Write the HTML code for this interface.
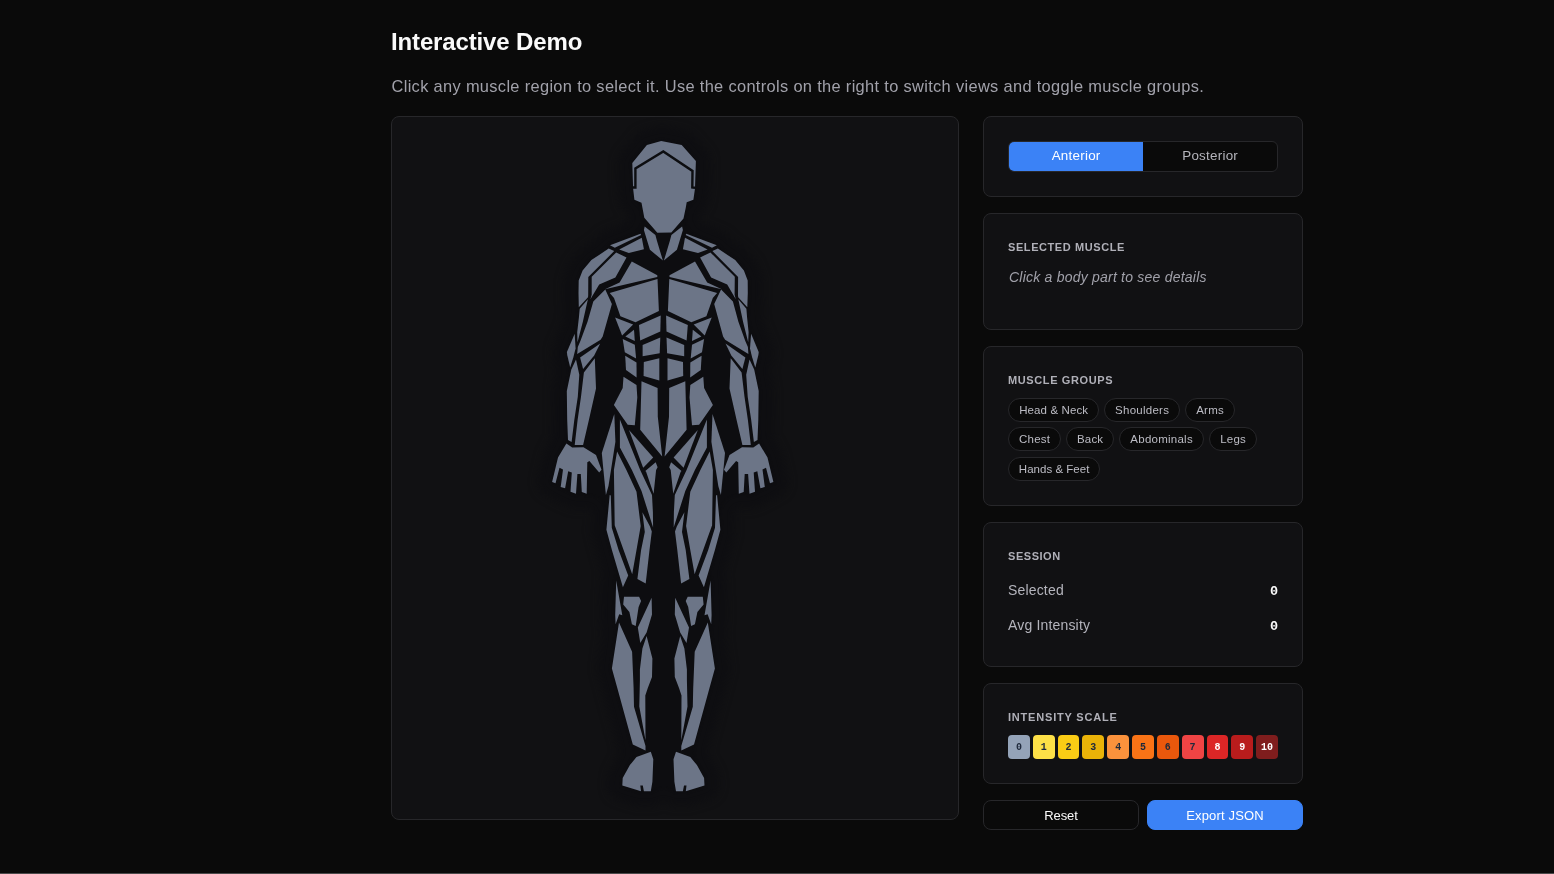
<!DOCTYPE html>
<html lang="en">
<head>
<meta charset="utf-8">
<title>Interactive Demo</title>
<style>
  html, body { margin: 0; padding: 0; }
  body {
    width: 1554px; height: 874px; overflow: hidden; position: relative;
    background: #0a0a0a; color: #fafafa;
    font-family: "Liberation Sans", sans-serif;
    -webkit-font-smoothing: antialiased;
  }
  #root { position: absolute; left: 0; top: 0; width: 1554px; height: 874px; will-change: transform; }
  .abs { position: absolute; box-sizing: border-box; }
  h1 {
    position: absolute; margin: 0; left: 391px; top: 27px;
    font-size: 24px; line-height: 30px; font-weight: 700; color: #fafafa;
    letter-spacing: -0.14px; white-space: nowrap;
  }
  .sub {
    position: absolute; margin: 0; left: 391.5px; top: 75px;
    font-size: 16.4px; line-height: 22px; color: #a1a1aa; white-space: nowrap;
    letter-spacing: 0.334px;
  }
  .card {
    position: absolute; box-sizing: border-box;
    background: #111113; border: 1px solid #27272a; border-radius: 8px;
  }
  .label {
    position: absolute; left: 24px; margin: 0;
    font-size: 11px; line-height: 14px; font-weight: 700; color: #b0b0b8;
    letter-spacing: 0.6px; white-space: nowrap;
  }
  .toggle {
    position: absolute; left: 24px; top: 24px; width: 270px; height: 31px;
    box-sizing: border-box; border: 1px solid #27272a; border-radius: 6px;
    background: #0a0a0a; overflow: hidden; display: flex;
  }
  .toggle div {
    flex: 1; text-align: center; font-size: 13.4px; line-height: 28.6px; color: #b4b4bb; letter-spacing: 0.25px; text-indent: 0.25px;
  }
  .toggle div.on { background: #3b82f6; color: #ffffff; }
  .hint {
    position: absolute; left: 25px; top: 54px; margin: 0;
    font-size: 14px; line-height: 18px; font-style: italic; color: #a1a1aa; white-space: nowrap; letter-spacing: 0.22px;
  }
  .chip {
    position: absolute; box-sizing: border-box; height: 24px;
    border: 1px solid #27272a; border-radius: 12px; background: #0a0a0a;
    font-size: 11.5px; line-height: 22px; color: #bcbcc4; text-align: center; white-space: nowrap; letter-spacing: 0.25px; text-indent: 0.25px;
  }
  .row { position: absolute; left: 24px; right: 24px; height: 20px; }
  .row span { position: absolute; top: 0; font-size: 14px; line-height: 20px; color: #b4b4bc; white-space: nowrap; letter-spacing: 0.17px; }
  .row span.k { left: 0; }
  .row span.v { right: 0; top: 1.5px; font-family: "Liberation Mono", monospace; font-weight: 700; font-size: 13.5px; color: #fafafa; letter-spacing: 0; }
  .sws { position: absolute; left: 24px; top: 51px; width: 270px; height: 24px; display: flex; gap: 3px; }
  .sw {
    flex: 1; height: 24px; border-radius: 4px;
    font-family: "Liberation Mono", monospace; font-weight: 700; font-size: 10px; line-height: 26px;
    text-align: center; color: #1e293b;
  }
  .btn {
    position: absolute; box-sizing: border-box; top: 800px; height: 30px; border-radius: 8px;
    font-size: 13px; line-height: 29px; text-align: center; color: #fafafa;
  }
  .btn.reset { left: 983px; width: 156px; background: #0a0a0a; border: 1px solid #27272a; letter-spacing: -0.1px; }
  .btn.export { left: 1147px; width: 156px; background: #3b82f6; border: 1px solid #3b82f6; color: #fff; letter-spacing: 0.17px; text-indent: 0.17px; }
  .bottomline { position: absolute; left: 0; top: 873px; width: 1554px; height: 1px; background: #4a4a4a; }
</style>
</head>
<body>
  <div id="root">
  <h1>Interactive Demo</h1>
  <p class="sub">Click any muscle region to select it. Use the controls on the right to switch views and toggle muscle groups.</p>

  <div class="card" style="left:391px; top:116px; width:568px; height:704px;">
    <svg class="abs" style="left:-1px; top:-1px;" width="568" height="704" viewBox="391 116 568 704">
<defs><filter id="soft" color-interpolation-filters="sRGB" x="-20%" y="-10%" width="140%" height="120%"><feGaussianBlur stdDeviation="4"/></filter><filter id="soft2" color-interpolation-filters="sRGB" x="-20%" y="-10%" width="140%" height="120%"><feGaussianBlur stdDeviation="1"/></filter></defs>
<path filter="url(#soft)" fill="#0e0e11" d="M537.6,478.4 537.2,482.8 538.1,487.1 540.2,491.0 544.7,494.9 549.5,497.1 553.8,500.2 570.6,507.8 575.0,508.7 581.4,508.1 589.3,508.7 591.4,509.6 592.7,511.5 591.6,532.5 602.7,573.2 601.2,580.6 600.2,614.2 600.8,626.2 602.2,632.6 596.9,669.4 619.4,752.9 609.7,770.7 608.2,774.5 607.4,786.2 607.7,789.0 609.3,793.0 611.9,796.4 616.7,799.5 636.2,805.4 640.0,806.1 654.0,805.8 657.0,804.8 661.7,801.8 663.6,801.5 672.9,805.8 687.3,806.1 711.4,798.9 715.9,795.3 718.7,790.4 719.4,786.2 719.0,777.2 717.7,771.9 707.4,752.9 729.9,669.4 724.6,632.6 726.0,626.2 726.6,614.2 725.6,580.6 724.1,573.2 735.2,532.5 734.1,511.6 735.7,509.5 737.8,508.8 743.3,508.1 749.5,508.8 753.6,508.2 761.6,505.1 766.7,502.0 771.7,500.2 776.0,497.1 780.8,494.9 784.3,492.1 787.4,487.1 788.3,481.3 781.7,452.8 772.9,436.5 773.6,389.7 770.1,370.7 773.1,357.4 773.6,350.6 772.5,346.2 762.7,322.2 761.8,312.0 762.8,293.2 762.7,280.5 762.1,276.5 756.4,262.3 744.7,248.6 730.9,239.1 727.2,234.6 724.8,232.7 702.0,223.7 699.0,220.8 700.0,214.1 705.7,208.0 708.3,201.5 710.1,188.4 710.7,158.6 709.4,154.5 707.1,151.0 691.9,133.9 687.1,130.9 663.9,126.3 659.9,126.1 641.5,130.9 638.8,132.3 635.3,135.5 620.1,154.3 618.4,157.9 617.3,162.7 618.1,188.7 619.7,202.5 622.0,207.9 628.2,214.4 628.9,220.5 625.9,223.3 604.7,231.3 600.8,233.5 595.5,239.2 580.8,249.5 571.1,261.0 568.7,265.1 563.9,278.4 563.5,293.6 564.2,311.8 563.2,322.1 553.1,346.0 552.0,350.4 552.7,358.8 555.4,370.7 551.9,389.7 552.6,436.5 543.8,452.8Z"/>
<path filter="url(#soft2)" fill="#0d0d10" d="M550.7,481.5 551.3,483.1 556.5,485.5 560.1,488.2 564.5,489.7 569.9,493.0 575.4,495.2 581.4,494.5 586.6,495.3 590.4,495.2 593.8,495.8 597.0,497.1 599.9,499.0 602.3,501.4 605.1,505.9 606.1,509.1 606.3,514.4 604.9,530.1 615.6,567.8 616.3,572.8 616.0,576.1 614.7,581.0 613.7,614.6 614.2,624.4 615.4,628.3 615.7,633.1 610.4,668.6 632.2,747.1 633.0,752.5 632.7,755.9 631.7,759.3 621.3,777.6 621.0,786.2 621.9,787.0 640.1,792.5 644.4,792.7 651.1,792.6 657.4,788.9 662.6,787.9 666.0,788.1 669.4,788.9 675.7,792.6 686.0,792.7 705.2,786.9 706.0,785.6 705.5,777.6 695.1,759.3 694.1,755.9 693.8,752.5 694.6,747.1 716.4,668.6 711.1,633.1 711.4,628.3 712.6,624.4 713.1,614.6 712.1,581.0 710.8,576.1 710.5,572.8 711.2,567.8 721.9,530.1 720.5,514.5 720.7,509.2 721.8,506.0 723.4,503.0 726.9,499.1 729.8,497.3 734.8,495.5 742.4,494.6 750.1,495.2 755.6,493.0 761.0,489.7 765.4,488.2 769.0,485.5 774.2,483.1 774.8,481.8 768.9,457.2 760.8,443.2 759.4,438.4 760.2,390.8 756.5,371.6 756.7,368.5 759.7,356.0 760.1,351.8 752.7,333.5 750.9,330.2 749.3,324.6 748.2,311.7 748.9,306.8 749.3,293.3 749.2,280.1 745.2,269.8 736.2,259.0 722.2,249.6 717.6,244.1 696.6,236.1 693.4,234.5 689.4,231.0 686.6,226.5 685.6,223.2 685.2,219.8 686.7,210.8 688.0,207.7 689.9,204.9 694.9,199.6 696.6,188.0 697.4,160.8 697.0,159.9 682.2,143.5 661.2,139.5 646.4,143.5 631.4,161.7 630.8,163.6 631.6,188.2 632.8,199.5 633.3,200.5 638.5,205.5 640.3,208.2 641.5,211.3 642.7,219.6 642.3,223.0 641.3,226.2 638.5,230.7 634.5,234.1 609.2,244.1 604.6,249.4 590.4,259.0 581.4,269.8 577.5,279.6 577.0,293.3 577.3,306.8 577.8,311.7 576.6,324.6 575.0,330.2 573.1,333.5 565.4,351.8 565.8,355.7 568.8,368.5 569.0,371.6 565.3,390.8 566.1,438.4 564.7,443.2 556.6,457.2Z"/>
<g fill="#6c7587">
<polygon points="661.2,141.0 646.9,144.9 632.3,163.0 633.1,188.5 634.4,199.8 641.5,202.8 644.3,217.7 657.3,232.8 671.3,232.4 683.5,218.6 685.7,208.0 686.7,202.3 693.4,199.8 695.0,188.5 695.9,160.9 681.7,144.9"/>
<polygon points="644.7,226.5 643.9,230.0 649.9,249.7 662.9,260.6 657.0,241.1 655.4,234.9"/>
<polygon points="682.1,226.5 682.9,230.0 676.9,249.7 663.9,260.6 669.8,241.1 671.4,234.9"/>
<polygon points="610.0,245.3 640.5,233.8 641.1,235.0 614.8,247.8"/>
<polygon points="716.8,245.3 686.3,233.8 685.7,235.0 712.0,247.8"/>
<polygon points="619.2,249.4 641.8,237.7 643.9,249.3 628.8,253.0"/>
<polygon points="707.6,249.4 685.0,237.7 682.9,249.3 698.0,253.0"/>
<polygon points="608.7,248.6 614.2,251.1 588.3,277.0 588.2,295.2 588.0,297.3 578.8,307.2 578.5,293.1 578.7,280.6 582.6,270.6 591.4,260.1"/>
<polygon points="717.9,248.6 712.4,251.1 738.1,277.0 738.0,295.2 738.2,297.3 747.3,307.2 747.8,293.1 747.7,280.6 743.9,270.6 735.2,260.1"/>
<polygon points="616.2,252.4 626.5,257.5 615.4,277.5 599.2,284.6 590.4,299.2 591.7,294.8 591.7,276.8"/>
<polygon points="710.4,252.4 700.1,257.5 711.1,277.5 727.2,284.6 735.8,299.2 734.6,294.8 734.8,276.8"/>
<polygon points="631.8,261.6 657.3,275.2 657.3,277.0 605.0,289.2 619.6,282.6"/>
<polygon points="695.0,261.6 669.5,275.2 669.5,277.0 721.8,289.2 707.2,282.6"/>
<polygon points="609.7,293.1 657.5,279.0 658.9,310.9 635.5,322.3 620.4,316.3 614.0,297.9"/>
<polygon points="717.1,293.1 669.3,279.0 667.9,310.9 691.3,322.3 706.4,316.3 712.8,297.9"/>
<polygon points="605.3,289.4 611.9,304.1 602.7,336.4 600.6,339.8 577.2,354.0 577.8,346.9 580.4,341.0 587.5,321.7 593.3,301.5"/>
<polygon points="721.1,289.4 714.2,304.1 723.1,336.4 725.1,339.8 748.4,354.0 747.9,346.9 745.3,341.0 738.4,321.7 732.9,301.5"/>
<polygon points="579.7,308.7 587.9,299.3 582.8,322.0 577.5,342.3 577.2,332.2 578.9,317.6"/>
<polygon points="746.4,308.7 738.3,299.3 743.1,322.0 748.2,342.3 748.6,332.2 747.1,317.6"/>
<polygon points="574.7,333.7 566.9,351.9 567.2,355.0 570.2,367.5 573.3,357.5 575.6,348.6"/>
<polygon points="751.1,333.7 758.7,351.9 758.4,355.0 755.3,367.5 752.2,357.5 750.0,348.6"/>
<polygon points="580.1,357.4 600.2,343.6 594.2,355.4 583.1,369.1"/>
<polygon points="745.4,357.4 725.5,343.6 731.3,355.4 742.4,369.1"/>
<polygon points="576.0,359.6 579.3,374.7 577.8,396.8 574.3,420.0 571.6,441.9 568.0,440.1 567.2,420.0 566.8,391.0 571.3,369.4"/>
<polygon points="749.5,359.6 746.2,374.7 747.7,396.8 751.2,420.0 753.9,441.9 757.5,440.1 758.3,420.0 758.7,391.0 754.2,369.4"/>
<polygon points="583.9,372.6 594.8,358.3 596.0,388.5 588.9,420.0 583.1,445.1 574.7,445.1 577.6,420.0 581.0,396.8"/>
<polygon points="741.6,372.6 730.7,358.3 729.5,388.5 736.6,420.0 742.4,445.1 750.8,445.1 747.9,420.0 744.5,396.8"/>
<polygon points="566.4,443.4 572.2,447.4 583.5,447.2 596.0,455.1 601.5,469.8 599.2,472.5 589.4,461.0 587.3,462.2 586.7,493.8 581.8,492.1 580.8,474.0 577.4,474.0 576.0,493.8 570.5,491.7 571.8,472.5 568.2,471.2 565.1,488.2 560.7,486.9 563.0,469.5 559.5,467.7 555.5,483.2 552.1,481.9 558.0,457.6"/>
<polygon points="759.1,443.4 753.3,447.4 742.0,447.2 729.5,455.1 724.0,469.8 726.3,472.5 736.1,461.0 738.2,462.2 738.8,493.8 743.7,492.1 744.7,474.0 748.1,474.0 749.5,493.8 755.0,491.7 753.7,472.5 757.3,471.2 760.4,488.2 764.8,486.9 762.5,469.5 766.0,467.7 770.0,483.2 773.4,481.9 767.5,457.6"/>
<polygon points="615.1,317.5 633.1,324.4 622.1,335.5"/>
<polygon points="711.7,317.5 693.7,324.4 704.7,335.5"/>
<polygon points="625.4,336.6 634.0,329.8 634.8,341.0"/>
<polygon points="701.4,336.6 692.8,329.8 692.0,341.0"/>
<polygon points="622.7,338.9 634.8,344.8 636.1,358.5 624.8,352.3"/>
<polygon points="704.1,338.9 692.0,344.8 690.7,358.5 702.0,352.3"/>
<polygon points="625.2,355.7 636.5,362.4 636.6,377.4 626.0,370.0"/>
<polygon points="701.6,355.7 690.3,362.4 690.2,377.4 700.8,370.0"/>
<polygon points="623.5,376.7 636.5,385.1 637.3,397.6 634.8,425.2 627.7,424.8 613.9,405.1 622.7,388.0"/>
<polygon points="703.3,376.7 690.3,385.1 689.5,397.6 692.0,425.2 699.1,424.8 712.9,405.1 704.1,388.0"/>
<polygon points="639.0,325.1 660.7,315.5 660.3,331.4 640.2,340.6"/>
<polygon points="687.8,325.1 666.1,315.5 666.5,331.4 686.6,340.6"/>
<polygon points="642.6,345.0 660.3,337.5 659.7,353.3 642.6,356.2"/>
<polygon points="684.2,345.0 666.5,337.5 667.1,353.3 684.2,356.2"/>
<polygon points="643.8,361.9 659.3,358.3 659.3,380.5 643.6,376.0"/>
<polygon points="683.0,361.9 667.5,358.3 667.5,380.5 683.2,376.0"/>
<polygon points="641.5,381.3 657.6,388.0 657.8,416.7 662.2,456.4 640.2,429.7"/>
<polygon points="685.3,381.3 669.2,388.0 669.0,416.7 664.6,456.4 686.6,429.7"/>
<polygon points="614.3,414.0 615.4,441.8 608.5,485.9 605.9,495.1 603.4,470.0 601.8,453.1"/>
<polygon points="712.5,414.0 711.4,441.8 718.3,485.9 720.9,495.1 723.4,470.0 725.0,453.1"/>
<polygon points="617.1,451.4 626.4,470.0 636.5,491.8 640.7,526.0 636.5,550.0 632.2,574.3 623.6,550.0 614.7,525.2 613.9,470.0"/>
<polygon points="709.7,451.4 700.4,470.0 690.3,491.8 686.1,526.0 690.3,550.0 694.6,574.3 703.2,550.0 712.1,525.2 712.9,470.0"/>
<polygon points="609.7,495.1 610.8,495.5 611.8,527.7 618.6,550.0 628.2,575.5 622.9,587.2 611.9,550.0 606.4,529.8"/>
<polygon points="717.1,495.1 716.0,495.5 715.0,527.7 708.2,550.0 698.6,575.5 703.9,587.2 714.9,550.0 720.4,529.8"/>
<polygon points="619.9,419.6 640.2,470.0 652.0,495.1 652.9,512.0 653.1,527.5 641.5,490.9 631.9,470.0 619.9,447.6"/>
<polygon points="706.9,419.6 686.6,470.0 674.8,495.1 673.9,512.0 673.7,527.5 685.3,490.9 694.9,470.0 706.9,447.6"/>
<polygon points="629.0,430.1 653.2,457.5 643.2,467.7"/>
<polygon points="697.8,430.1 673.6,457.5 683.6,467.7"/>
<polygon points="645.3,471.1 655.7,462.3 657.6,467.3 656.1,470.0 653.6,493.8 646.1,471.7"/>
<polygon points="681.5,471.1 671.1,462.3 669.2,467.3 670.7,470.0 673.2,493.8 680.7,471.7"/>
<polygon points="642.4,512.2 650.0,526.5 651.8,531.5 649.5,550.0 645.7,583.5 637.4,578.9 641.1,550.0 644.8,531.9"/>
<polygon points="684.4,512.2 676.8,526.5 675.0,531.5 677.3,550.0 681.1,583.5 689.4,578.9 685.7,550.0 682.0,531.9"/>
<polygon points="616.2,580.5 622.3,615.3 619.2,614.2 615.6,624.2 615.2,615.0"/>
<polygon points="710.6,580.5 704.5,615.3 707.6,614.2 711.2,624.2 711.6,615.0"/>
<polygon points="624.0,596.8 639.1,596.8 641.1,601.0 638.6,606.9 635.7,625.9 631.9,624.2 629.4,611.9 623.2,604.4"/>
<polygon points="702.8,596.8 687.7,596.8 685.7,601.0 688.2,606.9 691.1,625.9 694.9,624.2 697.4,611.9 703.6,604.4"/>
<polygon points="651.6,597.7 652.0,614.4 646.6,632.6 640.3,643.0 637.8,627.5 647.0,607.7"/>
<polygon points="675.2,597.7 674.8,614.4 680.2,632.6 686.5,643.0 689.0,627.5 679.8,607.7"/>
<polygon points="619.0,622.5 632.1,651.8 633.6,688.0 634.0,706.8 645.5,746.1 645.5,750.4 632.8,744.6 617.3,688.0 611.9,668.5"/>
<polygon points="707.8,622.5 694.7,651.8 693.2,688.0 692.8,706.8 681.3,746.1 681.3,750.4 694.0,744.6 709.5,688.0 714.9,668.5"/>
<polygon points="646.6,635.9 652.4,658.5 652.0,676.9 647.8,688.0 645.3,695.5 645.5,740.2 639.3,706.4 639.9,680.0 639.9,669.4 642.4,648.5"/>
<polygon points="680.2,635.9 674.4,658.5 674.8,676.9 679.0,688.0 681.5,695.5 681.3,740.2 687.5,706.4 686.9,680.0 686.9,669.4 684.4,648.5"/>
<polygon points="650.8,751.7 653.3,759.2 652.4,781.8 650.8,791.2 643.9,791.2 642.8,785.6 640.3,785.6 641.0,791.2 622.3,785.6 622.7,778.1 629.9,765.1 636.5,757.1"/>
<polygon points="676.0,751.7 673.5,759.2 674.4,781.8 676.0,791.2 682.9,791.2 684.0,785.6 686.5,785.6 685.8,791.2 704.5,785.6 704.1,778.1 696.9,765.1 690.3,757.1"/>
</g>
<polyline points="633.0,187.5 635.4,187.5 635.4,168.5 663.3,151.4 692.5,171.0 692.3,187.5 695.0,187.7" fill="none" stroke="#0c0d10" stroke-width="2.4" stroke-linejoin="miter"/>
    </svg>
  </div>

  <div class="card" style="left:983px; top:116px; width:320px; height:81px;">
    <div class="toggle"><div class="on">Anterior</div><div>Posterior</div></div>
  </div>

  <div class="card" style="left:983px; top:213px; width:320px; height:117px;">
    <p class="label" style="top:26px; letter-spacing:0.58px;">SELECTED MUSCLE</p>
    <p class="hint">Click a body part to see details</p>
  </div>

  <div class="card" style="left:983px; top:346px; width:320px; height:160px;">
    <p class="label" style="top:26px; letter-spacing:0.61px;">MUSCLE GROUPS</p>
    <div class="chip" style="left:24px; top:51px; width:91px; letter-spacing:0.11px;">Head &amp; Neck</div>
    <div class="chip" style="left:120px; top:51px; width:76px;">Shoulders</div>
    <div class="chip" style="left:201px; top:51px; width:50px;">Arms</div>
    <div class="chip" style="left:24px; top:80px; width:53px;">Chest</div>
    <div class="chip" style="left:82px; top:80px; width:48px; letter-spacing:0.17px;">Back</div>
    <div class="chip" style="left:135px; top:80px; width:85px;">Abdominals</div>
    <div class="chip" style="left:225px; top:80px; width:48px;">Legs</div>
    <div class="chip" style="left:24px; top:110px; width:92px; letter-spacing:0.02px;">Hands &amp; Feet</div>
  </div>

  <div class="card" style="left:983px; top:522px; width:320px; height:145px;">
    <p class="label" style="top:26px; letter-spacing:0.54px;">SESSION</p>
    <div class="row" style="top:57px;"><span class="k">Selected</span><span class="v">0</span></div>
    <div class="row" style="top:92px;"><span class="k">Avg Intensity</span><span class="v">0</span></div>
  </div>

  <div class="card" style="left:983px; top:683px; width:320px; height:101px;">
    <p class="label" style="top:26px; letter-spacing:0.8px;">INTENSITY SCALE</p>
    <div class="sws"><div class="sw" style="background:#94a3b8;">0</div><div class="sw" style="background:#fde047;">1</div><div class="sw" style="background:#facc15;">2</div><div class="sw" style="background:#eab308;">3</div><div class="sw" style="background:#fb923c;">4</div><div class="sw" style="background:#f97316;">5</div><div class="sw" style="background:#ea580c;">6</div><div class="sw" style="background:#ef4444;">7</div><div class="sw" style="background:#dc2626; color:#fff;">8</div><div class="sw" style="background:#b91c1c; color:#fff;">9</div><div class="sw" style="background:#7f1d1d; color:#fff;">10</div></div>
  </div>

  <div class="btn reset">Reset</div>
  <div class="btn export">Export JSON</div>
  <div class="bottomline"></div>
  </div>
</body>
</html>
